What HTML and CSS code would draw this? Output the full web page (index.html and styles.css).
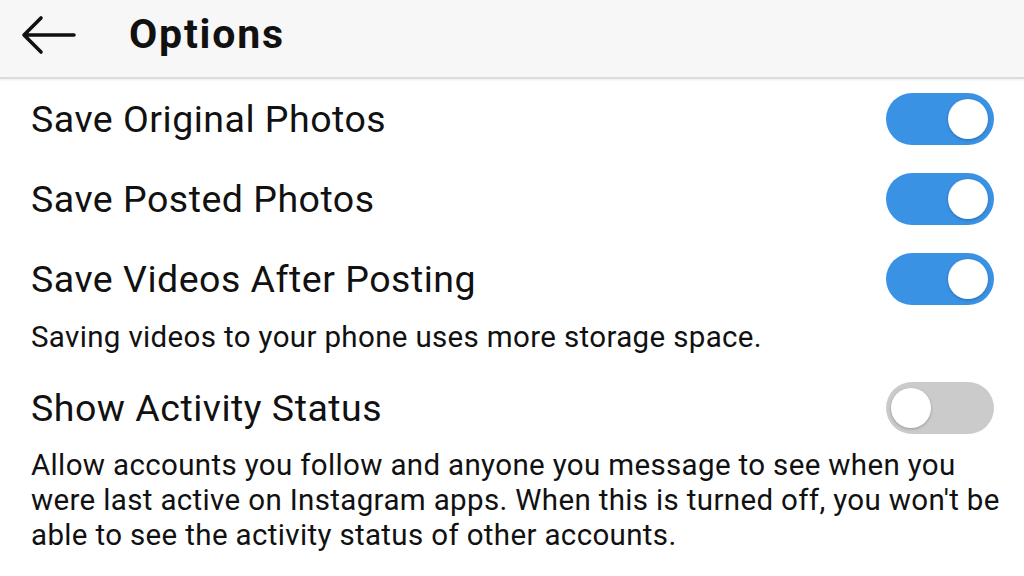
FILE: index.html
```html
<!DOCTYPE html>
<html>
<head>
<meta charset="utf-8">
<link rel="stylesheet" href="styles.css">
</head>
<body>
<header class="bar">
  <svg class="back" width="56" height="40" viewBox="0 0 56 40">
    <path d="M53 20 H4 M20 3 L3 20 L20 37" fill="none" stroke="#111" stroke-width="3.6" stroke-linecap="round" stroke-linejoin="round"/>
  </svg>
  <h1 class="title">Options</h1>
</header>
<main class="list">
  <div class="row">
    <span class="label">Save Original Photos</span>
    <span class="toggle on"><span class="knob"></span></span>
  </div>
  <div class="row">
    <span class="label">Save Posted Photos</span>
    <span class="toggle on"><span class="knob"></span></span>
  </div>
  <div class="row">
    <span class="label">Save Videos After Posting</span>
    <span class="toggle on"><span class="knob"></span></span>
  </div>
  <p class="desc">Saving videos to your phone uses more storage space.</p>
  <div class="row row-gap">
    <span class="label">Show Activity Status</span>
    <span class="toggle off"><span class="knob"></span></span>
  </div>
  <p class="para">Allow accounts you follow and anyone you message to see when you<br>were last active on Instagram apps. When this is turned off, you won't be<br>able to see the activity status of other accounts.</p>
</main>
</body>
</html>
```
FILE: styles.css
```css
* { box-sizing: border-box; }
html, body { margin: 0; padding: 0; }
body {
  width: 1024px;
  height: 576px;
  overflow: hidden;
  background: #ffffff;
  font-family: Roboto, "Noto Sans", sans-serif;
  color: #111;
}
.bar {
  height: 79px;
  background: #f7f7f7;
  border-bottom: 2px solid #dcdcdc;
  box-shadow: 0 1px 2px rgba(0,0,0,0.08);
  display: flex;
  align-items: center;
  padding-left: 21px;
}
.back { display: block; margin-top: -8px; }
.title {
  margin: -10px 0 0 52px;
  font-size: 41px;
  font-weight: 700;
  letter-spacing: 1.8px;
}
.list {
  display: flex;
  flex-direction: column;
  padding: 0 31px;
}
.row {
  height: 80px;
  display: flex;
  align-items: center;
  justify-content: space-between;
}
.label {
  font-size: 37.5px;
  letter-spacing: 0.5px;
}
.toggle {
  width: 108px;
  height: 52px;
  border-radius: 26px;
  display: flex;
  align-items: center;
  padding: 0 6px;
  margin-right: -1px;
}
.toggle.on { background: #3a92e4; justify-content: flex-end; }
.toggle.off { background: #cbcbcb; justify-content: flex-start; padding: 0 5px; }
.knob {
  width: 40px;
  height: 40px;
  border-radius: 50%;
  background: #fff;
  box-shadow: 0 1px 3px rgba(0,0,0,0.25);
}
.desc {
  margin: 0;
  font-size: 29.5px;
  line-height: 36px;
  letter-spacing: 0.35px;
}
.row-gap { margin-top: 13px; }
.para {
  margin: 0 -30px 0 0;
  font-size: 29.5px;
  line-height: 35px;
  letter-spacing: 0.35px;
  white-space: nowrap;
}
```
